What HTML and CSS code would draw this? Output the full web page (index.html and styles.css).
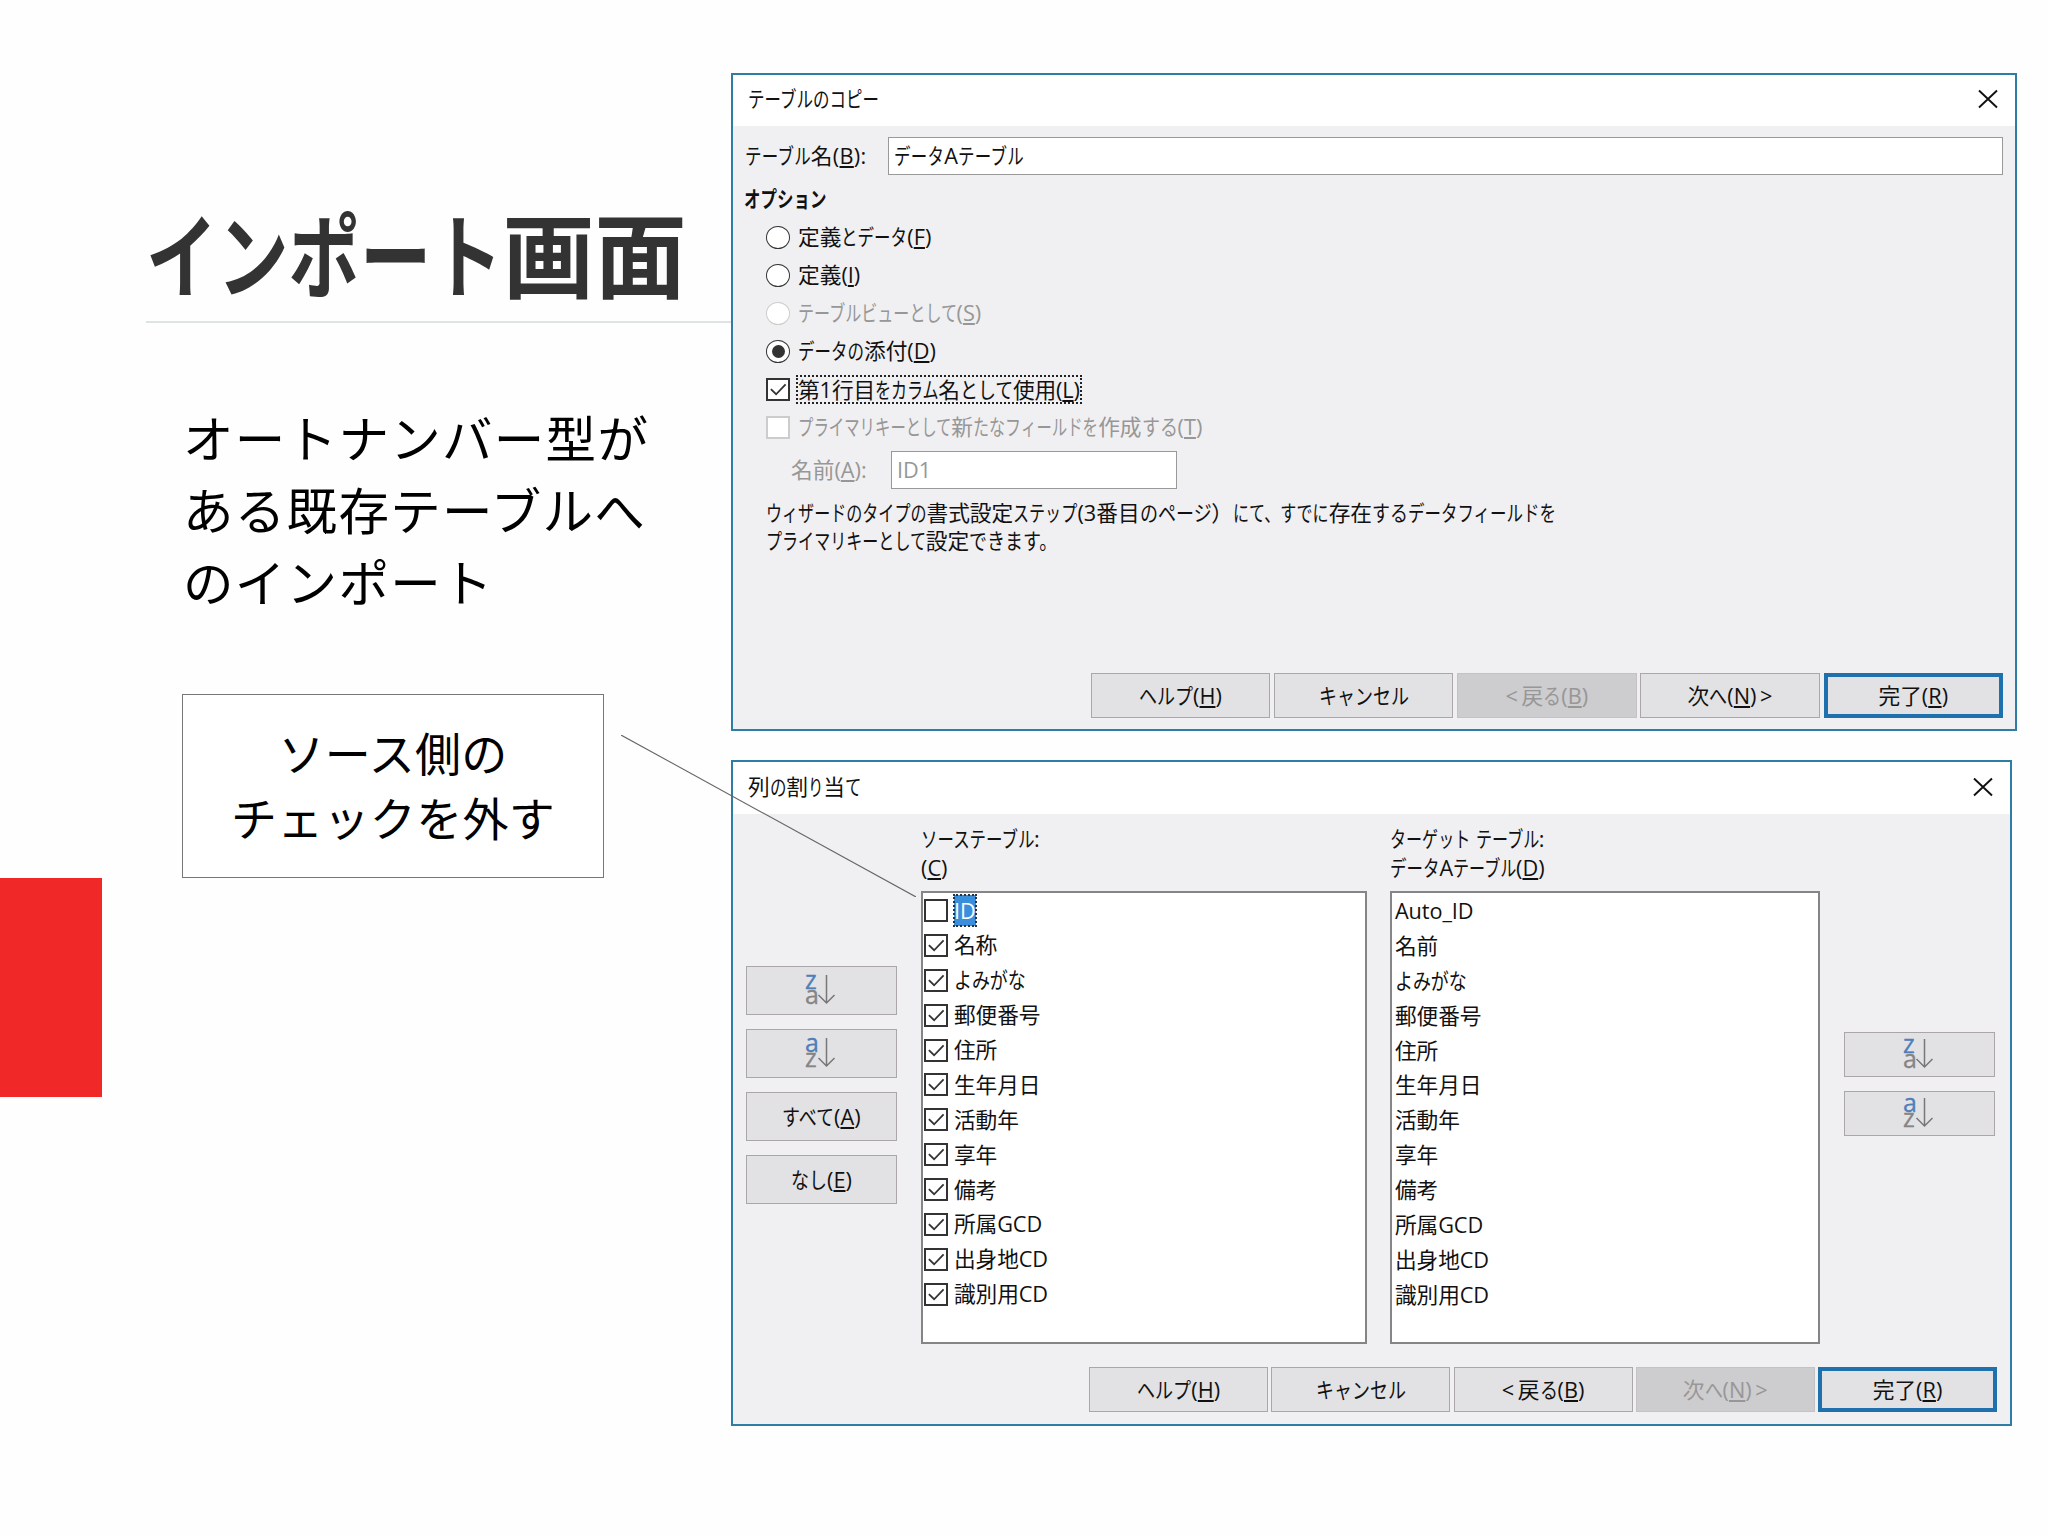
FILE: index.html
```html
<!DOCTYPE html>
<html lang="ja">
<head>
<meta charset="utf-8">
<title>インポート画面</title>
<link rel="stylesheet" href="styles.css">
</head>
<body>
<svg class="defs" width="0" height="0">
  <symbol id="close" viewBox="0 0 20 20"><path d="M1 1.500L19 18.500M19 1.500L1 18.500" fill="none" stroke="#111" stroke-width="1.900"/></symbol>
  <symbol id="tick" viewBox="0 0 20 20"><path d="M2.500 9.500L8 15L18 4.500" fill="none" stroke="#333" stroke-width="1.900"/></symbol>
</svg>
<main class="slide">
  <section class="notes">
    <h1><span class="k n5">インポート</span>画面</h1>
    <p class="lead">オートナンバー型が<br>ある既存テーブルへ<br>のインポート</p>
    <div class="callout">ソース側の<br>チェックを外す</div>
    <div class="accent"></div>
  </section>
  <section class="shots">
    <article class="dialog copy">
      <header><span><span class="w n8">テーブルのコピー</span></span><svg class="close"><use href="#close"/></svg></header>
      <div class="body">
        <div class="name-row"><label><span class="w n4">テーブル</span>名(<u>B</u>):</label><div class="input"><span class="w n3">データ</span>A<span class="w n4">テーブル</span></div></div>
        <h2><span class="w n5">オプション</span></h2>
        <div class="options">
          <div class="opt"><i class="radio"></i><span>定義<span class="w n4">とデータ</span>(<u>F</u>)</span></div>
          <div class="opt"><i class="radio"></i><span>定義(<u>I</u>)</span></div>
          <div class="opt off"><i class="radio"></i><span><span class="k n10">テーブルビューとして</span>(<u>S</u>)</span></div>
          <div class="opt"><i class="radio on"></i><span><span class="w n4">データの</span>添付(<u>D</u>)</span></div>
          <div class="opt"><i class="check"><svg><use href="#tick"/></svg></i><span class="focus">第1行目<span class="k n4">をカラム</span>名<span class="h n3">として</span>使用(<u>L</u>)</span></div>
          <div class="opt off"><i class="check"></i><span><span class="t n10">プライマリキーとして</span>新<span class="k n3">たなフ</span><span class="t n5">ィールドを</span>作成<span class="h n2">する</span>(<u>T</u>)</span></div>
        </div>
        <div class="field-row off"><label>名前(<u>A</u>):</label><div class="input">ID1</div></div>
        <p class="hint"><span class="k n10">ウィザードのタイプの</span>書式設定<span class="k n4">ステップ</span>(3番目<span class="h n4">のページ</span><span class="close-paren">）</span><span class="k n6">にて、すでに</span>存在<span class="h n2">する</span><span class="w n9">データフィールドを</span><br><span class="k n10">プライマリキーとして</span>設定<span class="h n5">できます。</span></p>
        <footer>
          <div class="btn"><span class="h n3">ヘルプ</span>(<u>H</u>)</div>
          <div class="btn"><span class="h n5">キャンセル</span></div>
          <div class="btn dis">&lt; 戻<span class="h n1">る</span>(<u>B</u>)</div>
          <div class="btn">次<span class="h n1">へ</span>(<u>N</u>) &gt;</div>
          <div class="btn primary">完了(<u>R</u>)</div>
        </footer>
      </div>
    </article>
    <article class="dialog assign">
      <header><span>列<span class="w n1">の</span>割<span class="t n1">り</span>当<span class="w n1">て</span></span><svg class="close"><use href="#close"/></svg></header>
      <div class="body">
        <div class="columns">
          <div class="side left">
            <div class="btn"><svg class="sort" viewBox="0 0 30 34"><text class="glyph blue" x="0" y="15">z</text><text class="glyph" x="0" y="30">a</text><path d="M21.500 1V29M13.500 21L21.500 29L29.500 21"/></svg></div>
            <div class="btn"><svg class="sort" viewBox="0 0 30 34"><text class="glyph blue" x="0" y="15">a</text><text class="glyph" x="0" y="30">z</text><path d="M21.500 1V29M13.500 21L21.500 29L29.500 21"/></svg></div>
            <div class="btn"><span class="h n3">すべて</span>(<u>A</u>)</div>
            <div class="btn"><span class="h n2">なし</span>(<u>E</u>)</div>
          </div>
          <div class="col source">
            <div class="caption"><span class="w n7">ソーステーブル</span>:<br>(<u>C</u>)</div>
            <ul class="list">
              <li><i class="check"></i><span class="selected">ID</span></li>
              <li><i class="check"><svg><use href="#tick"/></svg></i>名称</li>
              <li><i class="check"><svg><use href="#tick"/></svg></i><span class="h n4">よみがな</span></li>
              <li><i class="check"><svg><use href="#tick"/></svg></i>郵便番号</li>
              <li><i class="check"><svg><use href="#tick"/></svg></i>住所</li>
              <li><i class="check"><svg><use href="#tick"/></svg></i>生年月日</li>
              <li><i class="check"><svg><use href="#tick"/></svg></i>活動年</li>
              <li><i class="check"><svg><use href="#tick"/></svg></i>享年</li>
              <li><i class="check"><svg><use href="#tick"/></svg></i>備考</li>
              <li><i class="check"><svg><use href="#tick"/></svg></i>所属GCD</li>
              <li><i class="check"><svg><use href="#tick"/></svg></i>出身地CD</li>
              <li><i class="check"><svg><use href="#tick"/></svg></i>識別用CD</li>
            </ul>
          </div>
          <div class="col target">
            <div class="caption"><span class="k n5">ターゲット</span> <span class="k n4">テーブル</span>:<br><span class="w n3">データ</span>A<span class="k n4">テーブル</span>(<u>D</u>)</div>
            <ul class="list">
              <li>Auto_ID</li>
              <li>名前</li>
              <li><span class="h n4">よみがな</span></li>
              <li>郵便番号</li>
              <li>住所</li>
              <li>生年月日</li>
              <li>活動年</li>
              <li>享年</li>
              <li>備考</li>
              <li>所属GCD</li>
              <li>出身地CD</li>
              <li>識別用CD</li>
            </ul>
          </div>
          <div class="side right">
            <div class="btn"><svg class="sort" viewBox="0 0 30 34"><text class="glyph blue" x="0" y="15">z</text><text class="glyph" x="0" y="30">a</text><path d="M21.500 1V29M13.500 21L21.500 29L29.500 21"/></svg></div>
            <div class="btn"><svg class="sort" viewBox="0 0 30 34"><text class="glyph blue" x="0" y="15">a</text><text class="glyph" x="0" y="30">z</text><path d="M21.500 1V29M13.500 21L21.500 29L29.500 21"/></svg></div>
          </div>
        </div>
        <footer>
          <div class="btn"><span class="h n3">ヘルプ</span>(<u>H</u>)</div>
          <div class="btn"><span class="h n5">キャンセル</span></div>
          <div class="btn">&lt; 戻<span class="h n1">る</span>(<u>B</u>)</div>
          <div class="btn dis">次<span class="h n1">へ</span>(<u>N</u>) &gt;</div>
          <div class="btn primary">完了(<u>R</u>)</div>
        </footer>
      </div>
    </article>
  </section>
  <svg class="connector" viewBox="0 0 295 162"><path d="M0 0L295 162" stroke="#666" stroke-width="1.100"/></svg>
</main>
</body>
</html>
```
FILE: styles.css
```css
* { box-sizing: border-box; }
body { margin: 0; background: #fefefe; color: #111; font-family: "Open Sans", "Noto Sans CJK JP", sans-serif; }
.defs { display: block; height: 0; }
.slide { position: relative; width: 2048px; height: 1536px; display: grid; grid-template-columns: 731px 1fr; overflow: hidden; }

/* Condensed kana: each run is squeezed and gives back the width it saves */
.k, .h, .t, .w { display: inline-block; white-space: nowrap; transform: scaleX(var(--s)); transform-origin: 0 50%; margin-right: calc(var(--n) * (var(--s) - 1) * 1em); }
.k { --s: .74; }
.w { --s: .76; }
.h { --s: .83; }
.t { --s: .71; }
.n1 { --n: 1; } .n2 { --n: 2; } .n3 { --n: 3; } .n4 { --n: 4; } .n5 { --n: 5; }
.n6 { --n: 6; } .n7 { --n: 7; } .n8 { --n: 8; } .n9 { --n: 9; } .n10 { --n: 10; }
.close-paren { display: inline-block; width: 22px; white-space: nowrap; }

/* Left part of the slide */
.notes { display: flex; flex-direction: column; font-family: "Noto Sans CJK JP", sans-serif; }
h1 { margin: 0 0 0 146px; height: 323px; padding-top: 191px; font-size: 92px; line-height: 120px; font-weight: 700; color: #333; border-bottom: 2px solid #dfe3e2; white-space: nowrap; }
h1 .k { --s: .775; }
.lead { margin: 77px 0 0 183px; height: 219px; font-size: 50.500px; letter-spacing: 1.300px; line-height: 72px; color: #000; white-space: nowrap; }
.callout { margin: 75px 0 0 182px; width: 422px; height: 184px; padding-bottom: 4px; border: 1px solid #777; background: #fff; display: flex; align-items: center; justify-content: center; text-align: center; font-size: 46px; letter-spacing: .3px; line-height: 65px; color: #000; }
.accent { width: 102px; height: 219px; background: #f02828; }
.connector { position: absolute; left: 621px; top: 735px; width: 295px; height: 162px; }

/* Dialogs */
.shots { padding-top: 73px; display: flex; flex-direction: column; gap: 29px; }
.dialog { border: 2px solid #2f7da4; background: #f0eff1; display: flex; flex-direction: column; font-size: 21.7px; line-height: 28px; }
.copy { width: 1286px; height: 658px; }
.assign { width: 1281px; height: 666px; }
.dialog header { height: 51px; background: #fff; display: flex; align-items: center; justify-content: space-between; padding: 0 17px 3px 15px; }
.dialog.assign header { height: 52px; }
.close { width: 20px; height: 20px; }
.body { flex: 1; display: flex; flex-direction: column; padding: 11px 12px 11px; }
u { text-decoration-thickness: 1.500px; text-underline-offset: 2px; }
.input { border: 1.500px solid #999; background: #fff; height: 38px; display: flex; align-items: center; padding-left: 5px; }
.name-row { display: flex; align-items: center; }
.name-row label { width: 143px; letter-spacing: .3px; }
.name-row .input { flex: 1; letter-spacing: .3px; }
h2 { margin: 10px 0 5px -1px; font-size: 21.700px; line-height: 28px; font-weight: 600; }
.options { padding-left: 21px; }
.opt { height: 38px; display: flex; align-items: center; gap: 8px; white-space: nowrap; }
.radio { width: 24px; height: 23px; border: 1.500px solid #333; border-radius: 50%; background: #fff; display: flex; align-items: center; justify-content: center; }
.radio.on::after { content: ""; width: 13px; height: 13px; border-radius: 50%; background: #333; }
.check { flex: none; width: 24px; height: 23px; border: 2px solid #333; background: #fff; display: flex; }
.check svg { width: 20px; height: 19px; }
.off { color: #979797; }
.off .radio, .off .check { border-color: #ccc; }
.focus { outline: 2px dotted #222; outline-offset: 0; width: 282px; height: 25px; line-height: 25px; letter-spacing: -.1px; }
.field-row { display: flex; align-items: center; padding-left: 46px; margin-top: 5px; }
.field-row label { width: 100px; }
.field-row .input { width: 286px; }
.hint { margin: 10px 0 0 21px; white-space: nowrap; }
footer { margin-top: auto; display: flex; justify-content: flex-end; gap: 3.700px; }
.assign footer { gap: 3.200px; }
.btn { width: 179.500px; height: 45px; border: 1.500px solid #aaa6a9; background: #e2e1e3; display: flex; align-items: center; justify-content: center; white-space: pre; }
.assign footer .btn { width: 179px; }
footer .btn { word-spacing: -2px; }
.btn.dis { background: #cdccce; border-color: #c5c2c4; color: #979797; }
.btn.primary { border: 4px solid #1f71ad; }

/* Column assignment */
.assign .body { padding: 11px 13px 12px; }
.columns { display: flex; }
.side { width: 151px; display: flex; flex-direction: column; }
.side .btn { width: 151px; }
.left { padding-top: 141px; gap: 14px; margin-right: 24px; }
.left .btn { height: 49px; }
.right { padding-top: 207px; gap: 14px; }
.source { width: 446px; margin-right: 23px; }
.target { width: 430px; margin-right: 24px; }
.caption { height: 66px; line-height: 28.500px; }
.list { margin: 0; padding: 0; height: 453px; border: 2px solid #858587; background: #fff; list-style: none; }
.list li { height: 34.900px; display: flex; align-items: center; gap: 6px; padding-left: 1px; letter-spacing: -.1px; }
.target li { padding: 1px 0 0 3px; }
.selected { background: #3a8fdc; color: #fff; line-height: 31px; outline: 2px dotted #234; outline-offset: -1px; }
.sort { width: 30px; height: 34px; margin-right: 4px; overflow: visible; }
.sort path { fill: none; stroke: #777; stroke-width: 1.500px; }
.glyph { font: 25px "Open Sans", sans-serif; fill: #858585; stroke: #858585; stroke-width: .3px; }
.blue { fill: #4f7fb8; stroke: #4f7fb8; }
```
